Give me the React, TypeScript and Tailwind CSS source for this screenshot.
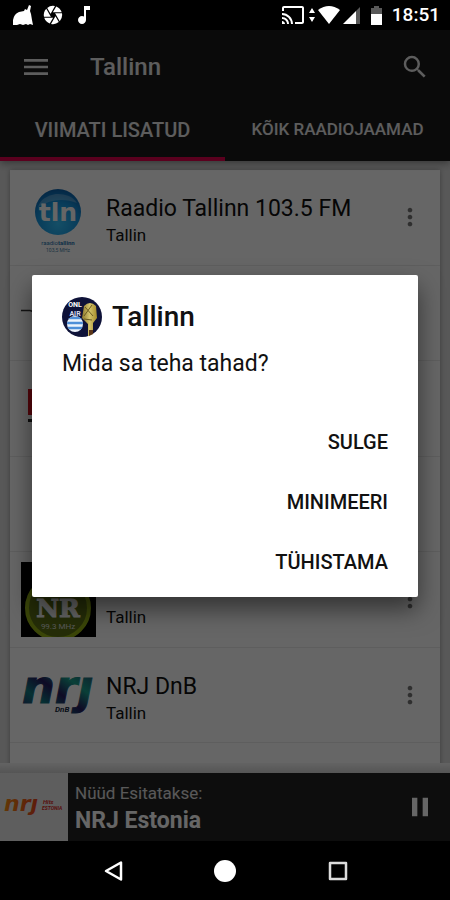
import React, { useState } from 'react';
import { MdCamera, MdCast, MdMenu, MdMoreVert, MdMusicNote, MdPause, MdPlayArrow, MdSearch } from 'react-icons/md';

interface Station {
    id: number;
    name?: string;
    city?: string;
    logo: React.ReactNode;
}

const TlnLogo = () => (
    <svg viewBox="0 0 75 75" className="size-full" aria-hidden="true">
        <defs>
            <radialGradient id="tln" cx="0.5" cy="0.75" r="0.75">
                <stop offset="0" stopColor="#35c4ff" />
                <stop offset="0.6" stopColor="#1596e0" />
                <stop offset="1" stopColor="#0b5fa8" />
            </radialGradient>
        </defs>
        <circle cx="37" cy="32" r="23" fill="url(#tln)" />
        <path d="M17 27a21 17 0 0 1 39-4c-13-5-26-4-39 4z" fill="#fff" opacity="0.25" />
        <text x="37" y="41" textAnchor="middle" fontSize="25" fontWeight="700" fill="#fff" fontFamily="'DejaVu Sans', sans-serif">tln</text>
        <text x="37" y="65" textAnchor="middle" fontSize="6" fill="#2676b0" fontFamily="Roboto, sans-serif">
            raadio<tspan fontWeight="700">tallinn</tspan>
        </text>
        <text x="37" y="72" textAnchor="middle" fontSize="5" fill="#4a7fa8" fontFamily="Roboto, sans-serif">103,5 MHz</text>
    </svg>
);

const LineLogo = () => (
    <svg viewBox="0 0 75 75" className="size-full" aria-hidden="true">
        <path d="M0 35.500h9l3 1" stroke="#333" strokeWidth="1.500" fill="none" />
    </svg>
);

const RedLogo = () => (
    <svg viewBox="0 0 75 75" className="size-full" aria-hidden="true">
        <rect x="7" y="18" width="60" height="26" fill="#d6101c" />
        <rect x="7" y="48" width="60" height="3" fill="#222" />
    </svg>
);

const NrLogo = () => (
    <svg viewBox="0 0 75 75" className="size-full" aria-hidden="true">
        <rect width="75" height="75" fill="#000" />
        <circle cx="37" cy="46" r="31" fill="#5c7214" stroke="#94b016" strokeWidth="4" />
        <text x="37" y="55" textAnchor="middle" fontSize="25" fontWeight="700" fill="#fff" stroke="#fff" strokeWidth="1" fontFamily="'DejaVu Serif', serif">NR</text>
        <text x="37" y="67" textAnchor="middle" fontSize="8" fill="#ddd" fontFamily="Roboto, sans-serif">99.3 MHz</text>
    </svg>
);

const NrjDnbLogo = () => (
    <svg viewBox="0 0 75 75" className="size-full" aria-hidden="true">
        <defs>
            <linearGradient id="dnb" x1="0" y1="1" x2="1" y2="0">
                <stop offset="0" stopColor="#2b1c66" />
                <stop offset="0.25" stopColor="#0f7a80" />
                <stop offset="0.45" stopColor="#241a5c" />
                <stop offset="0.65" stopColor="#18a08c" />
                <stop offset="1" stopColor="#27205e" />
            </linearGradient>
            <clipPath id="dnb-clip"><rect y="19" width="75" height="40" /></clipPath>
        </defs>
        <g clipPath="url(#dnb-clip)">
            <text x="1" y="46" fontSize="46" fontStyle="italic" fontWeight="700" fill="url(#dnb)" stroke="url(#dnb)" strokeWidth="1" fontFamily="'DejaVu Sans', sans-serif">nrj</text>
        </g>
        <text x="34" y="55" fontSize="8" fontStyle="italic" fontWeight="700" fill="#14263c" fontFamily="Roboto, sans-serif">DnB</text>
    </svg>
);

const NrjLogo = () => (
    <svg viewBox="0 0 68 68" className="size-full" aria-hidden="true">
        <defs>
            <linearGradient id="nrj" x1="0" y1="0" x2="1" y2="0">
                <stop offset="0" stopColor="#f58a10" />
                <stop offset="1" stopColor="#e8441c" />
            </linearGradient>
            <clipPath id="nrj-clip"><rect y="26" width="68" height="20" /></clipPath>
        </defs>
        <g clipPath="url(#nrj-clip)">
            <text x="4" y="38" fontSize="22" fontStyle="italic" fontWeight="700" fill="url(#nrj)" fontFamily="'DejaVu Sans', sans-serif">nrj</text>
        </g>
        <text x="43" y="31" fontSize="6" fontStyle="italic" fontWeight="700" fill="#d8281c" fontFamily="Roboto, sans-serif">Hits</text>
        <text x="42" y="37" fontSize="5" fontStyle="italic" fontWeight="700" fill="#d8281c" fontFamily="Roboto, sans-serif">ESTONIA</text>
    </svg>
);

const AppLogo = () => (
    <svg viewBox="0 0 40 40" className="size-10 shrink-0" aria-hidden="true">
        <defs>
            <clipPath id="badge"><circle cx="20" cy="20" r="20" /></clipPath>
            <clipPath id="flag"><circle cx="13" cy="27" r="8" /></clipPath>
            <linearGradient id="gold" x1="0" y1="0" x2="1" y2="0">
                <stop offset="0" stopColor="#8f7a2c" />
                <stop offset="0.5" stopColor="#d3c36c" />
                <stop offset="1" stopColor="#a68c2a" />
            </linearGradient>
        </defs>
        <g clipPath="url(#badge)">
            <rect width="40" height="40" fill="#0e1238" />
            <text x="13" y="10" textAnchor="middle" fontSize="7" fontWeight="700" fill="#fff" fontFamily="Roboto, sans-serif">ONL</text>
            <text x="13" y="19" textAnchor="middle" fontSize="7" fontWeight="700" fill="#d8dcf0" fontFamily="Roboto, sans-serif">AIR</text>
            <g clipPath="url(#flag)">
                <rect x="4" y="18" width="18" height="18" fill="#eef4fc" />
                <path d="M4 21h18M4 26h18M4 31h18" stroke="#4e8fd8" strokeWidth="2.500" />
            </g>
            <path d="M22 9q6-6 12 0l1 12-4 5v14h-5V27l-6-6z" fill="url(#gold)" />
            <path d="M23 10l8 9M30 8l-8 11M22 22l8 1" stroke="#6c5c22" strokeWidth="1" />
            <path d="M27 33h4v7h-4z" fill="#5a3418" />
        </g>
    </svg>
);

const stations: Station[] = [
    { id: 1, name: 'Raadio Tallinn 103.5 FM', city: 'Tallin', logo: <TlnLogo /> },
    { id: 2, logo: <LineLogo /> },
    { id: 3, logo: <RedLogo /> },
    { id: 4, logo: null },
    { id: 5, city: 'Tallin', logo: <NrLogo /> },
    { id: 6, name: 'NRJ DnB', city: 'Tallin', logo: <NrjDnbLogo /> },
];

const StatusBar = () => (
    <div className="flex h-[30px] shrink-0 items-center justify-between bg-black pr-[10px] pl-3 text-white">
        <div className="flex items-center gap-2">
            <svg viewBox="0 0 22 20" className="h-5 w-[22px]" fill="currentColor" aria-hidden="true">
                <path d="M1 20v-5q1-6 6-8l5-1 1-2 2 1 2-5 2 1-1 5 1 3 1 6 1 5-3-1-2 1-2-1-3 1-3-1-3 1z" />
            </svg>
            <MdCamera size={22} />
            <MdMusicNote size={24} />
        </div>
        <div className="flex items-center">
            <MdCast size={24} className="mr-1" />
            <svg viewBox="0 0 6 18" className="h-[18px] w-[6px]" fill="currentColor" aria-hidden="true">
                <path d="M3 2l3 5H0zM3 16l3-5H0z" />
            </svg>
            <svg viewBox="0 0 22 18" className="ml-[3px] h-[18px] w-[22px]" fill="currentColor" aria-hidden="true">
                <path d="M0 4q11-8 22 0L11 18z" />
            </svg>
            <svg viewBox="0 0 17 17" className="ml-[3px] size-[17px]" fill="currentColor" aria-hidden="true">
                <path d="M17 0v17h-4V4z" opacity="0.35" />
                <path d="M0 17L13 4v13z" />
            </svg>
            <svg viewBox="0 0 11 19" className="ml-[11px] h-[19px] w-[11px]" fill="currentColor" aria-hidden="true">
                <path d="M3 0h5v2h3v6H0V2h3z" opacity="0.35" />
                <path d="M0 8h11v11H0z" />
            </svg>
            <span className="ml-[10px] text-[19px] leading-7 font-medium">18:51</span>
        </div>
    </div>
);

const StationRow: React.FC<{ station: Station }> = ({ station }) => (
    <li className="flex items-center border-b border-[#ececec] pr-4 pl-[11px]">
        <div className="size-[75px] shrink-0">{station.logo}</div>
        <div className="ml-[10px] flex min-w-0 flex-1 flex-col pt-2">
            <span className="h-7 truncate text-[23px] leading-7 text-[#111]">{station.name}</span>
            <span className="h-6 text-[17px] leading-6 text-[#111]">{station.city}</span>
        </div>
        <button type="button" aria-label="Menu" className="text-[#757575]">
            <MdMoreVert size={28} />
        </button>
    </li>
);

const ExitDialog: React.FC<{ onClose: () => void }> = ({ onClose }) => (
    <div className="absolute inset-0 flex items-center justify-center bg-black/60 px-8">
        <div
            role="dialog"
            aria-labelledby="dialog-title"
            className="w-full rounded-xs bg-white px-[30px] pt-[22px] pb-[5px] text-[#111] shadow-[0_12px_24px_rgba(0,0,0,0.5)]"
        >
            <div className="flex items-center gap-[10px]">
                <AppLogo />
                <h2 id="dialog-title" className="text-[28px] leading-10 font-medium">Tallinn</h2>
            </div>
            <p className="mt-[9px] text-[23px] leading-9">Mida sa teha tahad?</p>
            <div className="mt-[30px] flex flex-col items-end text-xl font-medium">
                <button type="button" className="h-[60px]" onClick={onClose}>SULGE</button>
                <button type="button" className="h-[60px]" onClick={onClose}>MINIMEERI</button>
                <button type="button" className="h-[60px]" onClick={onClose}>TÜHISTAMA</button>
            </div>
        </div>
    </div>
);

const App: React.FC = () => {
    const [isDialogOpen, setIsDialogOpen] = useState(true);
    const [isPlaying, setIsPlaying] = useState(true);

    return (
        <div className="flex h-screen flex-col overflow-hidden bg-black font-[Roboto,sans-serif]">
            <StatusBar />

            <div className="relative flex min-h-0 flex-1 flex-col">
                <header className="z-0 shrink-0 bg-[#1a1a1a] text-white/90 shadow-[0_2px_8px_rgba(0,0,0,0.4)]">
                    <div className="flex h-[73px] items-center px-5">
                        <button type="button" aria-label="Menu">
                            <MdMenu size={32} />
                        </button>
                        <h1 className="ml-[38px] flex-1 text-2xl font-medium">Tallinn</h1>
                        <button type="button" aria-label="Search">
                            <MdSearch size={30} />
                        </button>
                    </div>
                    <nav className="grid h-[58px] grid-cols-2 font-medium">
                        <button type="button" className="border-b-4 border-[#e0004d] text-xl">VIIMATI LISATUD</button>
                        <button type="button" className="border-b-4 border-transparent text-[17px]">KÕIK RAADIOJAAMAD</button>
                    </nav>
                </header>

                <main className="min-h-0 flex-1 overflow-hidden bg-[#dcdcdc] px-[10px] pt-[9px]">
                    <div className="bg-white pb-8 shadow-[0_0_5px_rgba(0,0,0,0.3)]">
                        <ul className="grid h-[573px] grid-rows-6">
                            {stations.map((station) => (
                                <StationRow key={station.id} station={station} />
                            ))}
                        </ul>
                    </div>
                </main>
                <div className="h-[10px] shrink-0 bg-linear-to-b from-[#f8f8f8] to-[#d4d4d4]" />

                <footer className="flex h-[68px] shrink-0 items-center bg-[#222] pr-[14px] text-white">
                    <div className="size-[68px] shrink-0 bg-[#ececec]">
                        <NrjLogo />
                    </div>
                    <div className="ml-[7px] min-w-0 flex-1">
                        <p className="text-[17px] leading-7 text-white/85">Nüüd Esitatakse:</p>
                        <p className="text-[23px] leading-7 font-bold">NRJ Estonia</p>
                    </div>
                    <button type="button" aria-label="Pause" onClick={() => setIsPlaying(!isPlaying)}>
                        {isPlaying ? <MdPause size={32} /> : <MdPlayArrow size={32} />}
                    </button>
                </footer>

                {isDialogOpen && <ExitDialog onClose={() => setIsDialogOpen(false)} />}
            </div>

            <nav className="flex h-[59px] shrink-0 items-center bg-black px-[12.5%] text-white">
                <button type="button" aria-label="Back" className="flex flex-1 justify-center">
                    <svg viewBox="0 0 24 24" className="size-6" fill="none" stroke="currentColor" strokeWidth="2.500" strokeLinejoin="round">
                        <path d="M20 3.500v17L5 12z" />
                    </svg>
                </button>
                <button type="button" aria-label="Home" className="flex flex-1 justify-center">
                    <svg viewBox="0 0 24 24" className="size-6" fill="currentColor">
                        <circle cx="12" cy="12" r="11" />
                    </svg>
                </button>
                <button type="button" aria-label="Recents" className="flex flex-1 justify-center">
                    <svg viewBox="0 0 24 24" className="size-6" fill="none" stroke="#ddd" strokeWidth="2.500" strokeLinejoin="round">
                        <rect x="4" y="4" width="16" height="16" />
                    </svg>
                </button>
            </nav>
        </div>
    );
};

export default App;
